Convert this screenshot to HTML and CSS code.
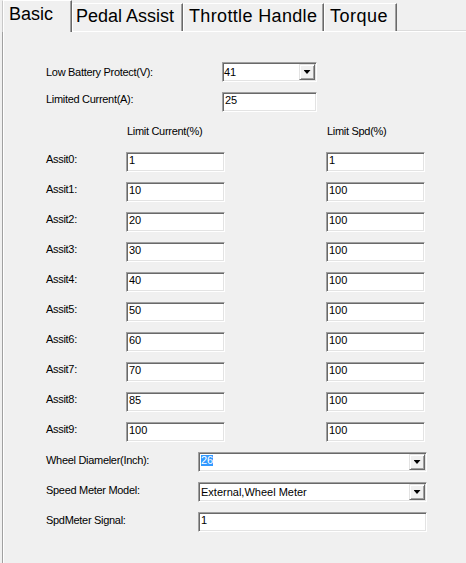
FILE: index.html
```html
<!DOCTYPE html>
<html>
<head>
<meta charset="utf-8">
<title>Basic</title>
<link rel="stylesheet" href="styles.css">
</head>
<body>
<div class="tabstrip">
  <div class="tab tab-basic active">Basic</div>
  <div class="tab tab-pedal">Pedal Assist</div>
  <div class="tab tab-throttle">Throttle Handle</div>
  <div class="tab tab-torque">Torque</div>
</div>
<div class="panel">
  <div class="form">
    <div class="row row-top">
      <div class="label lbl-low">Low Battery Protect(V):</div>
      <div class="combo"><div class="value">41</div><div class="drop"><span class="arrow"></span></div></div>
    </div>
    <div class="row row-top">
      <div class="label lbl-up">Limited Current(A):</div>
      <div class="field">25</div>
    </div>
    <div class="row row-assist">
      <div></div>
      <div class="head">Limit Current(%)</div>
      <div class="head">Limit Spd(%)</div>
    </div>
    <div class="row row-assist">
      <div class="label lbl-up">Assit0:</div>
      <div class="field field-a">1</div>
      <div class="field field-a">1</div>
    </div>
    <div class="row row-assist">
      <div class="label lbl-up">Assit1:</div>
      <div class="field field-a">10</div>
      <div class="field field-a">100</div>
    </div>
    <div class="row row-assist">
      <div class="label lbl-up">Assit2:</div>
      <div class="field field-a">20</div>
      <div class="field field-a">100</div>
    </div>
    <div class="row row-assist">
      <div class="label lbl-up">Assit3:</div>
      <div class="field field-a">30</div>
      <div class="field field-a">100</div>
    </div>
    <div class="row row-assist">
      <div class="label lbl-up">Assit4:</div>
      <div class="field field-a">40</div>
      <div class="field field-a">100</div>
    </div>
    <div class="row row-assist">
      <div class="label lbl-up">Assit5:</div>
      <div class="field field-a">50</div>
      <div class="field field-a">100</div>
    </div>
    <div class="row row-assist">
      <div class="label lbl-up">Assit6:</div>
      <div class="field field-a">60</div>
      <div class="field field-a">100</div>
    </div>
    <div class="row row-assist">
      <div class="label lbl-up">Assit7:</div>
      <div class="field field-a">70</div>
      <div class="field field-a">100</div>
    </div>
    <div class="row row-assist">
      <div class="label lbl-up">Assit8:</div>
      <div class="field field-a">85</div>
      <div class="field field-a">100</div>
    </div>
    <div class="row row-assist">
      <div class="label lbl-up">Assit9:</div>
      <div class="field field-a">100</div>
      <div class="field field-a">100</div>
    </div>
    <div class="row row-bottom">
      <div class="label">Wheel Diameler(Inch):</div>
      <div class="combo combo-wide"><div class="value"><span class="sel">26</span></div><div class="drop"><span class="arrow"></span></div></div>
    </div>
    <div class="row row-bottom">
      <div class="label">Speed Meter Model:</div>
      <div class="combo combo-wide"><div class="value">External,Wheel Meter</div><div class="drop"><span class="arrow"></span></div></div>
    </div>
    <div class="row row-bottom">
      <div class="label">SpdMeter Signal:</div>
      <div class="field field-wide">1</div>
    </div>
  </div>
</div>
</body>
</html>
```
FILE: styles.css
```css
html, body {
  margin: 0;
  padding: 0;
}
body {
  width: 466px;
  height: 563px;
  overflow: hidden;
  background: #f0f0f0;
  font-family: "Liberation Sans", Arial, sans-serif;
  color: #000;
}

/* ---------- tabs ---------- */
.tabstrip {
  display: flex;
  align-items: flex-end;
  height: 31px;
  padding-left: 2px;
}
.tab {
  box-sizing: border-box;
  height: 28px;
  padding-top: 2px;
  padding-left: 4px;
  font-size: 18px;
  line-height: 20px;
  white-space: nowrap;
  background: #f0f0f0;
  border-top: 1px solid #fff;
  border-left: 1px solid #fff;
  border-right: 1px solid #696969;
  box-shadow: inset -1px 0 0 #a0a0a0;
}
.tab.active {
  position: relative;
  z-index: 1;
  height: 32px;
  margin-bottom: -1px;
  padding-top: 3px;
  padding-left: 6px;
  border-left-color: #c8c8c8;
  box-shadow: inset -1px 0 0 #a0a0a0, inset 1px 0 0 #fff;
}
.tab-basic { width: 70px; }
.tab-pedal { width: 111px; padding-left: 3px; }
.tab-throttle { width: 141px; padding-left: 5px; letter-spacing: 0.35px; }
.tab-torque { width: 73px; padding-left: 5px; letter-spacing: 0.5px; }

/* ---------- panel ---------- */
.panel {
  box-sizing: border-box;
  height: 532px;
  margin-left: 2px;
  border-left: 1px solid #a0a0a0;
  border-top: 1px solid #fff;
  box-shadow: inset 1px 0 0 #fff, 0 -1px 0 #dcdcdc;
}
.form {
  display: flex;
  flex-direction: column;
  gap: 10px;
  padding-top: 30px;
  padding-left: 43px;
}
.row {
  display: grid;
  height: 20px;
}
.row-top { grid-template-columns: 176px 95px; }
.row-assist { grid-template-columns: 80px 200px 99px; }
.row-bottom { grid-template-columns: 152px 229px; }

.label, .head {
  font-size: 11px;
  line-height: 16px;
  letter-spacing: -0.3px;
  white-space: nowrap;
}
.lbl-low { padding-top: 2px; }
.lbl-up { margin-top: -1px; }
.head { padding-top: 1px; padding-left: 1px; }

/* ---------- edit fields ---------- */
.field, .combo {
  box-sizing: border-box;
  height: 20px;
  background: #fff;
  border: 1px solid;
  border-color: #a0a0a0 #fff #fff #a0a0a0;
  box-shadow: inset 1px 1px 0 #696969, inset -1px -1px 0 #e3e3e3;
  font-size: 11px;
  white-space: nowrap;
}
.field {
  line-height: 15px;
  padding-left: 2px;
}
.field-a { width: 99px; }
.field-wide { width: 229px; }

.combo {
  display: flex;
}
.value {
  flex: 1;
  line-height: 18px;
  padding-left: 1px;
  overflow: hidden;
}
.combo-wide .value { padding-left: 2px; }
.sel {
  display: inline-block;
  vertical-align: top;
  margin-top: 2px;
  line-height: 11px;
  background: #3399ff;
  color: #fff;
}
.drop {
  box-sizing: border-box;
  width: 16px;
  height: 16px;
  margin: 1px;
  background: #f0f0f0;
  border: 1px solid;
  border-color: #e3e3e3 #696969 #696969 #e3e3e3;
  box-shadow: inset 1px 1px 0 #fff, inset -1px -1px 0 #a0a0a0;
  display: flex;
  align-items: center;
  justify-content: center;
}
.arrow {
  display: block;
  width: 7px;
  height: 4px;
  background: #000;
  clip-path: polygon(0 0, 100% 0, 50% 100%);
}
```
